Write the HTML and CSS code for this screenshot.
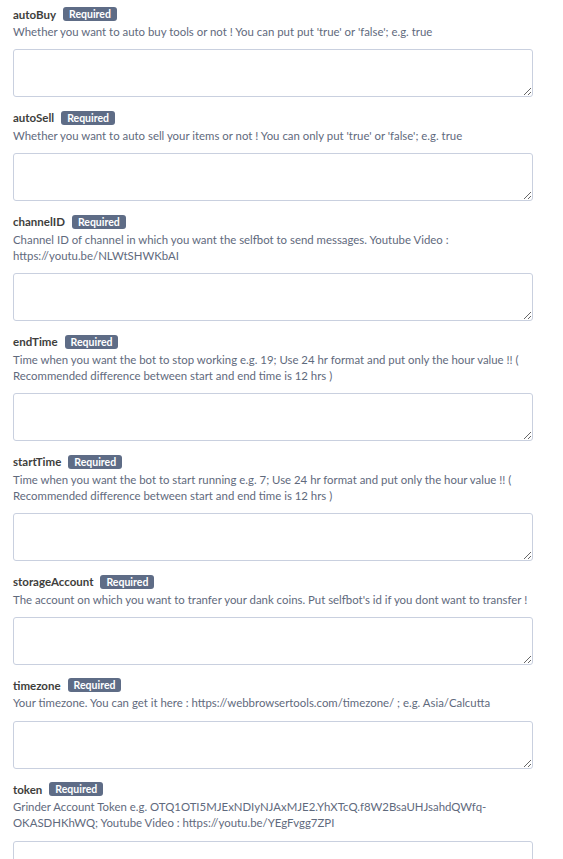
FILE: index.html
```html
<!DOCTYPE html>
<html>
<head>
<meta charset="utf-8">
<link rel="stylesheet" href="styles.css">
</head>
<body>
<div class="form">
  <div class="field">
    <div class="label-row"><span class="name">autoBuy</span><span class="badge">Required</span></div>
    <div class="desc">Whether you want to auto buy tools or not ! You can put put 'true' or 'false'; e.g. true</div>
    <textarea class="input"></textarea>
  </div>
  <div class="field">
    <div class="label-row"><span class="name">autoSell</span><span class="badge">Required</span></div>
    <div class="desc">Whether you want to auto sell your items or not ! You can only put 'true' or 'false'; e.g. true</div>
    <textarea class="input"></textarea>
  </div>
  <div class="field">
    <div class="label-row"><span class="name">channelID</span><span class="badge">Required</span></div>
    <div class="desc">Channel ID of channel in which you want the selfbot to send messages. Youtube Video : https://youtu.be/NLWtSHWKbAI</div>
    <textarea class="input"></textarea>
  </div>
  <div class="field">
    <div class="label-row"><span class="name">endTime</span><span class="badge">Required</span></div>
    <div class="desc">Time when you want the bot to stop working e.g. 19; Use 24 hr format and put only the hour value !! ( Recommended difference between start and end time is 12 hrs )</div>
    <textarea class="input"></textarea>
  </div>
  <div class="field">
    <div class="label-row"><span class="name">startTime</span><span class="badge">Required</span></div>
    <div class="desc">Time when you want the bot to start running e.g. 7; Use 24 hr format and put only the hour value !! ( Recommended difference between start and end time is 12 hrs )</div>
    <textarea class="input"></textarea>
  </div>
  <div class="field">
    <div class="label-row"><span class="name">storageAccount</span><span class="badge">Required</span></div>
    <div class="desc">The account on which you want to tranfer your dank coins. Put selfbot's id if you dont want to transfer !</div>
    <textarea class="input"></textarea>
  </div>
  <div class="field">
    <div class="label-row"><span class="name">timezone</span><span class="badge">Required</span></div>
    <div class="desc">Your timezone. You can get it here : https://webbrowsertools.com/timezone/ ; e.g. Asia/Calcutta</div>
    <textarea class="input"></textarea>
  </div>
  <div class="field">
    <div class="label-row"><span class="name">token</span><span class="badge">Required</span></div>
    <div class="desc">Grinder Account Token e.g. OTQ1OTI5MJExNDIyNJAxMJE2.YhXTcQ.f8W2BsaUHJsahdQWfq-OKASDHKhWQ; Youtube Video : https://youtu.be/YEgFvgg7ZPI</div>
    <textarea class="input"></textarea>
  </div>
</div>
</body>
</html>
```

FILE: styles.css
```css
html, body {
  margin: 0;
  padding: 0;
  background: #ffffff;
}

.form {
  display: flex;
  flex-direction: column;
  gap: 10.5px;
  padding: 4px 30px 0 13px;
  font-family: Lato, "Open Sans", "Liberation Sans", sans-serif;
}

.field {
  display: flex;
  flex-direction: column;
}

.label-row {
  display: flex;
  align-items: center;
  gap: 7px;
  height: 20px;
}

.name {
  font-size: 11.5px;
  font-weight: 700;
  color: #3e3e3c;
}

.badge {
  background: #5e6c86;
  color: #ffffff;
  font-size: 10.5px;
  font-weight: 700;
  line-height: 14px;
  padding: 0 6px;
  border-radius: 3px;
}

.desc {
  font-size: 11.4px;
  line-height: 16.25px;
  color: #5f6a7d;
  margin-bottom: 9px;
}

.input {
  box-sizing: border-box;
  display: block;
  width: 100%;
  height: 48px;
  margin: 0;
  border: 1px solid #c9d0df;
  border-radius: 3px;
  background: #ffffff;
}
```
